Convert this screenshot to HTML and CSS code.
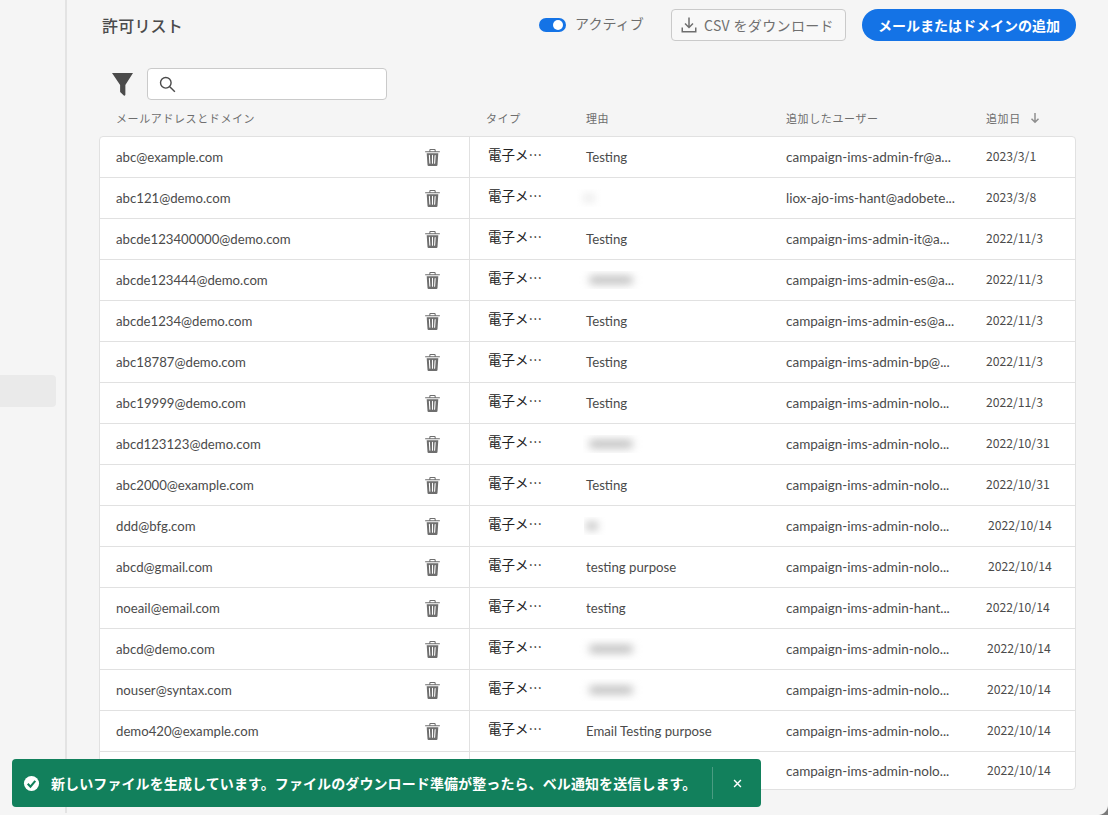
FILE: index.html
```html
<!DOCTYPE html>
<html lang="ja">
<head>
<meta charset="utf-8">
<title>許可リスト</title>
<link rel="stylesheet" href="styles.css">
</head>
<body>
<svg class="defs" aria-hidden="true">
  <symbol id="trash" viewBox="0 0 18 18"><path d="M15.75 3H12V2a1 1 0 0 0-1-1H7a1 1 0 0 0-1 1v1H2.25a.25.25 0 0 0-.25.25V4h14v-.75a.25.25 0 0 0-.25-.25zM7 2h4v1H7zM3.5 5l.77 11.13a1 1 0 0 0 1 .87h7.46a1 1 0 0 0 1-.87L14.5 5zM6.5 15a.5.5 0 0 1-.5-.47l-.46-7.5a.5.5 0 0 1 1-.06L7 14.47a.5.5 0 0 1-.5.53zm3-.5a.5.5 0 0 1-1 0v-7.5a.5.5 0 0 1 1 0zm2 0a.5.5 0 0 1-1 .03L11 7a.5.5 0 0 1 1 .06z" fill-rule="evenodd"/></symbol>
</svg>
<div class="app">
  <aside class="rail"><div class="rail-item"></div></aside>
  <main class="main">
    <header class="topbar">
      <h1 class="title">許可リスト</h1>
      <div class="toggle-wrap"><span class="toggle"><span class="knob"></span></span><span class="toggle-label">アクティブ</span></div>
      <button class="btn-outline"><svg class="dl" viewBox="0 0 18 18"><path d="M8.25 1.5h1.5v8.2l2.7-2.7 1.05 1.05L9 12.55 4.5 8.05 5.55 7l2.7 2.7z"/><path d="M1.5 11.5H3v3.5h12v-3.5h1.5v5h-15z"/></svg><span>CSV をダウンロード</span></button>
      <button class="btn-primary">メールまたはドメインの追加</button>
    </header>
    <div class="search-row">
      <svg class="funnel" viewBox="0 0 22 24"><path d="M0 0h22L14 12.5v10c0 1-.9 1.5-1.6.9l-3.6-3.3a1 1 0 0 1-.3-.8v-6.8z"/></svg>
      <label class="search"><svg class="lens" viewBox="0 0 18 18"><circle cx="7.2" cy="7.2" r="5.6"/><path d="M11.4 11.4l5.4 5.4"/></svg><input class="search-input" type="text" aria-label="検索"></label>
    </div>
    <div class="head">
      <span class="h-email">メールアドレスとドメイン</span>
      <span class="h-type">タイプ</span>
      <span class="h-reason">理由</span>
      <span class="h-user">追加したユーザー</span>
      <span class="h-date">追加日<svg class="sort" viewBox="0 0 10 12"><path d="M5 1v9M1.5 6.8L5 10.3l3.5-3.5"/></svg></span>
    </div>
    <div class="table">
      <div class="row"><span class="c-email">abc@example.com</span><svg class="del"><use href="#trash"/></svg><span class="c-type">電子メ…</span><span class="c-reason">Testing</span><span class="c-user">campaign-ims-admin-fr@a...</span><span class="c-date">2023/3/1</span></div>
      <div class="row"><span class="c-email">abc121@demo.com</span><svg class="del"><use href="#trash"/></svg><span class="c-type">電子メ…</span><span class="c-reason"><i class="smear tiny faint"></i></span><span class="c-user">liox-ajo-ims-hant@adobete...</span><span class="c-date">2023/3/8</span></div>
      <div class="row"><span class="c-email">abcde123400000@demo.com</span><svg class="del"><use href="#trash"/></svg><span class="c-type">電子メ…</span><span class="c-reason">Testing</span><span class="c-user">campaign-ims-admin-it@a...</span><span class="c-date">2022/11/3</span></div>
      <div class="row"><span class="c-email">abcde123444@demo.com</span><svg class="del"><use href="#trash"/></svg><span class="c-type">電子メ…</span><span class="c-reason"><i class="smear wide"></i></span><span class="c-user">campaign-ims-admin-es@a...</span><span class="c-date">2022/11/3</span></div>
      <div class="row"><span class="c-email">abcde1234@demo.com</span><svg class="del"><use href="#trash"/></svg><span class="c-type">電子メ…</span><span class="c-reason">Testing</span><span class="c-user">campaign-ims-admin-es@a...</span><span class="c-date">2022/11/3</span></div>
      <div class="row"><span class="c-email">abc18787@demo.com</span><svg class="del"><use href="#trash"/></svg><span class="c-type">電子メ…</span><span class="c-reason">Testing</span><span class="c-user">campaign-ims-admin-bp@...</span><span class="c-date">2022/11/3</span></div>
      <div class="row"><span class="c-email">abc19999@demo.com</span><svg class="del"><use href="#trash"/></svg><span class="c-type">電子メ…</span><span class="c-reason">Testing</span><span class="c-user">campaign-ims-admin-nolo...</span><span class="c-date">2022/11/3</span></div>
      <div class="row"><span class="c-email">abcd123123@demo.com</span><svg class="del"><use href="#trash"/></svg><span class="c-type">電子メ…</span><span class="c-reason"><i class="smear mid"></i></span><span class="c-user">campaign-ims-admin-nolo...</span><span class="c-date">2022/10/31</span></div>
      <div class="row"><span class="c-email">abc2000@example.com</span><svg class="del"><use href="#trash"/></svg><span class="c-type">電子メ…</span><span class="c-reason">Testing</span><span class="c-user">campaign-ims-admin-nolo...</span><span class="c-date">2022/10/31</span></div>
      <div class="row"><span class="c-email">ddd@bfg.com</span><svg class="del"><use href="#trash"/></svg><span class="c-type">電子メ…</span><span class="c-reason"><i class="smear tiny"></i></span><span class="c-user">campaign-ims-admin-nolo...</span><span class="c-date nudge">2022/10/14</span></div>
      <div class="row"><span class="c-email">abcd@gmail.com</span><svg class="del"><use href="#trash"/></svg><span class="c-type">電子メ…</span><span class="c-reason">testing purpose</span><span class="c-user">campaign-ims-admin-nolo...</span><span class="c-date nudge">2022/10/14</span></div>
      <div class="row"><span class="c-email">noeail@email.com</span><svg class="del"><use href="#trash"/></svg><span class="c-type">電子メ…</span><span class="c-reason">testing</span><span class="c-user">campaign-ims-admin-hant...</span><span class="c-date">2022/10/14</span></div>
      <div class="row"><span class="c-email">abcd@demo.com</span><svg class="del"><use href="#trash"/></svg><span class="c-type">電子メ…</span><span class="c-reason"><i class="smear wide soft"></i></span><span class="c-user">campaign-ims-admin-nolo...</span><span class="c-date nudge1">2022/10/14</span></div>
      <div class="row"><span class="c-email">nouser@syntax.com</span><svg class="del"><use href="#trash"/></svg><span class="c-type">電子メ…</span><span class="c-reason"><i class="smear wide soft"></i></span><span class="c-user">campaign-ims-admin-nolo...</span><span class="c-date nudge1">2022/10/14</span></div>
      <div class="row"><span class="c-email">demo420@example.com</span><svg class="del"><use href="#trash"/></svg><span class="c-type">電子メ…</span><span class="c-reason">Email Testing purpose</span><span class="c-user">campaign-ims-admin-nolo...</span><span class="c-date nudge1">2022/10/14</span></div>
      <div class="row last"><span class="c-email"></span><span class="c-covered"></span><span class="c-reason"></span><span class="c-user">campaign-ims-admin-nolo...</span><span class="c-date nudge1">2022/10/14</span></div>
    </div>
  </main>
</div>
<div class="toast">
  <svg class="check" viewBox="0 0 18 18"><circle cx="9" cy="9" r="8"/><path d="M5 9.3l2.9 3L13 6.2"/></svg>
  <span class="toast-text">新しいファイルを生成しています。ファイルのダウンロード準備が整ったら、ベル通知を送信します。</span>
  <span class="toast-div"></span>
  <svg class="close" viewBox="0 0 10 10"><path d="M1.2 1.2l7.6 7.6M8.8 1.2L1.2 8.8"/></svg>
</div>
<div class="corner"></div>
</body>
</html>
```
FILE: styles.css
```css
* { box-sizing: border-box; }
html, body { margin: 0; height: 100%; overflow: hidden; background: #f5f5f5; }
body { font-family: Lato, "Noto Sans CJK JP", sans-serif; color: #4b4b4b; position: relative; }
.defs { display: none; }
.app { display: flex; height: 815px; }
.rail { width: 67px; height: 813px; flex: none; border-right: 2px solid #e3e3e3; padding-top: 375px; }
.rail-item { width: 56px; height: 32px; background: #eaeaea; border-radius: 0 4px 4px 0; }
.main { width: 1009px; padding-left: 32px; flex: none; }
.topbar { display: flex; align-items: center; height: 32px; margin-top: 9px; }
.title { margin: 0; font: 500 16px "Noto Sans CJK JP", sans-serif; color: #4b4b4b; width: 440px; padding-left: 3px; letter-spacing: .2px; }
.toggle-wrap { display: flex; align-items: center; width: 132px; }
.toggle { width: 27px; height: 14px; border-radius: 7px; background: #1473e6; display: flex; align-items: center; justify-content: flex-end; padding-right: 3px; }
.knob { width: 10px; height: 10px; background: #fff; border-radius: 50%; }
.toggle-label { margin-left: 9px; font: 400 14px "Noto Sans CJK JP", sans-serif; letter-spacing: .1px; color: #6e6e6e; margin-top: -5px; }
.btn-outline { width: 175px; height: 32px; border: 1px solid #cacaca; border-radius: 4px; background: #f8f8f8; display: flex; align-items: center; padding: 0 0 0 8px; font: 400 14px "Noto Sans CJK JP", sans-serif; letter-spacing: .35px; color: #707070; margin-right: 16px; white-space: nowrap; }
.dl { width: 18px; height: 18px; fill: #6e6e6e; margin-right: 6px; flex: none; }
.btn-primary { width: 214px; height: 32px; border: 0; border-radius: 16px; background: #1473e6; color: #fff; font: 700 14px "Noto Sans CJK JP", sans-serif; padding: 0; white-space: nowrap; }
.search-row { display: flex; align-items: center; margin-top: 27px; padding-left: 13px; height: 32px; }
.funnel { width: 21px; height: 23px; fill: #4b4b4b; flex: none; }
.search { display: flex; align-items: center; width: 240px; height: 32px; margin-left: 14px; background: #fff; border: 1px solid #cacaca; border-radius: 4px; padding-left: 11px; }
.lens { width: 17px; height: 17px; fill: none; stroke: #4b4b4b; stroke-width: 1.5; flex: none; }
.search-input { flex: 1; min-width: 0; border: 0; outline: 0; background: transparent; }
.head { height: 36px; font: 400 11px "Noto Sans CJK JP", sans-serif; letter-spacing: .6px; color: #6e6e6e; display: flex; align-items: center; }
.h-email { margin-left: 17px; width: 370px; }
.h-type { width: 100px; }
.h-reason { width: 200px; }
.h-user { width: 200px; }
.h-date { display: flex; align-items: center; }
.sort { width: 10px; height: 12px; margin-left: 9px; fill: none; stroke: #8e8e8e; stroke-width: 1.5; }
.table { width: 977px; background: #fff; border: 1px solid #e1e1e1; border-radius: 4px; overflow: hidden; }
.row { height: 41px; border-bottom: 1px solid #e1e1e1; font-size: 13.2px; display: flex; align-items: center; position: relative; }
.row.last { border-bottom: 0; height: 37px; }
.row::before { content: ""; position: absolute; left: 369px; top: 0; bottom: -1px; width: 1px; background: #e1e1e1; }
.c-email { width: 370px; padding-left: 16px; }
.del { width: 19px; height: 19px; fill: #6e6e6e; margin-left: -47px; margin-right: 28px; flex: none; }
.c-covered { width: 116px; }
.c-type { width: 116px; padding-left: 18px; font: 400 13.5px "Noto Sans CJK JP", sans-serif; color: #222; margin-top: -7px; white-space: nowrap; }
.c-reason { width: 200px; }
.c-user { width: 200px; font-size: 13.5px; }
.c-date { flex: 1; font: 400 12.2px "Noto Sans CJK JP", sans-serif; margin-top: -2px; }
.nudge { padding-left: 2px; }
.nudge1 { padding-left: 1px; }
.smear { display: block; position: relative; overflow: hidden; height: 18px; width: 72px; margin-left: -9px; }
.smear::before { content: ""; position: absolute; left: 12px; top: 5px; height: 8px; width: 44px; background: #bcbcbc; border-radius: 4px; filter: blur(4.5px); }
.smear.wide { width: 73px; }
.smear.soft { height: 22px; }
.smear.soft::before { top: 7px; }
.smear.mid { width: 65px; margin-left: -3px; }
.smear.mid::before { left: 6px; width: 44px; }
.smear.tiny { width: 22px; margin-left: -2px; }
.smear.tiny::before { left: 2px; width: 12px; }
.smear.faint { margin-left: -9px; width: 24px; }
.smear.faint::before { background: #e8e8e8; left: 6px; }
.toast { position: absolute; left: 12px; top: 759px; width: 749px; height: 48px; background: #12805c; border-radius: 4px; display: flex; align-items: center; color: #fff; padding-left: 11px; }
.check { width: 17px; height: 17px; flex: none; }
.check circle { fill: #fff; }
.check path { fill: none; stroke: #12805c; stroke-width: 2.2; }
.toast-text { font: 700 14px "Noto Sans CJK JP", sans-serif; margin-left: 11px; letter-spacing: .1px; white-space: nowrap; width: 661px; }
.toast-div { width: 1px; height: 32px; background: #4a9c82; }
.close { width: 9px; height: 9px; margin-left: 20px; fill: none; stroke: #fff; stroke-width: 1.6; }
.corner { position: absolute; right: 0; bottom: 0; width: 10px; height: 10px; background: radial-gradient(circle at 0 0, #f5f5f5 9.5px, #7a7a7a 10.5px); }
```
